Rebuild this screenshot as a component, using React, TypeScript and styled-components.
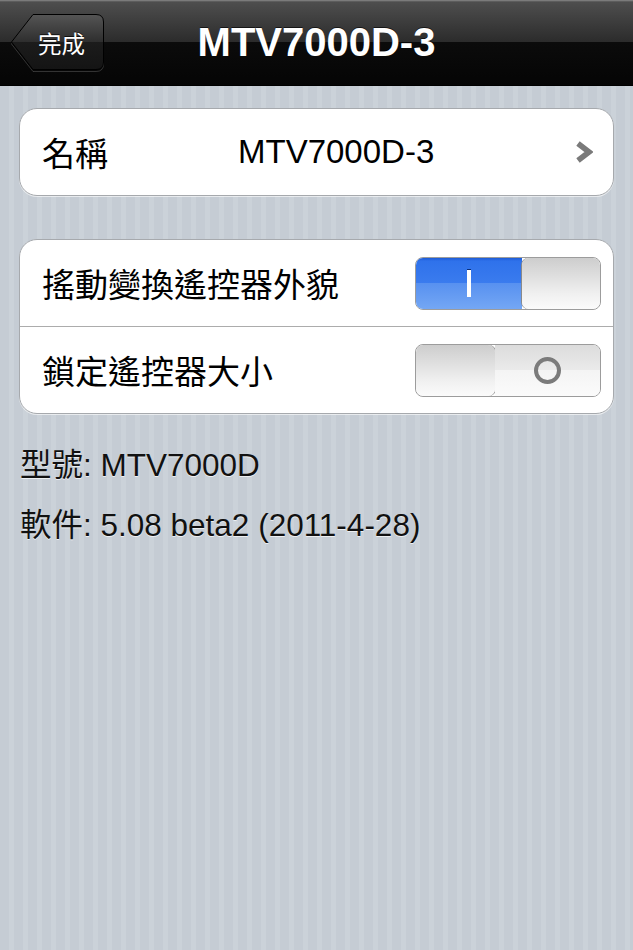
import styled, { createGlobalStyle } from 'styled-components';

const GlobalStyle = createGlobalStyle`
    html, body {
        margin: 0;
        padding: 0;
        min-height: 100%;
    }
    body {
        min-height: 950px;
        background: repeating-linear-gradient(90deg, #c5ccd4 0 9px, #cbd2d9 9px 14px);
        font-family: "Liberation Sans", "Noto Sans CJK TC", sans-serif;
    }
`;

const NavBar = styled.header`
    height: 85px;
    display: grid;
    grid-template-columns: 1fr auto 1fr;
    align-items: center;
    padding: 0 10px;
    background: linear-gradient(
        #8a8a8a 0,
        #4e4e4e 2px,
        #2b2b2b 50%,
        #0b0b0b 50%,
        #050505 100%
    );
    border-bottom: 1px solid #000;
`;

const BackButton = styled.button`
    justify-self: start;
    display: grid;
    width: 95px;
    height: 58px;
    padding: 0;
    border: 0;
    background: none;
    cursor: pointer;

    & > * {
        grid-area: 1 / 1;
    }
`;

const BackLabel = styled.span`
    align-self: center;
    padding-left: 28px;
    text-align: left;
    color: #fff;
    font-size: 23.5px;
    font-family: "Noto Sans CJK TC", sans-serif;
    text-shadow: 0 -1px 0 rgba(0, 0, 0, 0.7);
`;

const Title = styled.h1`
    margin: 0;
    color: #fff;
    font-size: 40px;
    font-weight: bold;
    text-shadow: 0 -1px 0 rgba(0, 0, 0, 0.6);
`;

const Content = styled.main`
    display: flex;
    flex-direction: column;
    padding: 22px 19px 0;
`;

const Group = styled.section<{ $gap?: number }>`
    margin-bottom: ${(p) => p.$gap ?? 0}px;
    background: #fff;
    border: 1px solid #a6a9ad;
    border-radius: 18px;
    box-shadow: 0 1px 0 rgba(255, 255, 255, 0.6);
    overflow: hidden;
`;

const Row = styled.div<{ $columns: string }>`
    height: 86px;
    display: grid;
    grid-template-columns: ${(p) => p.$columns};
    align-items: center;
    padding: 0 12px 0 22px;

    & + & {
        border-top: 1px solid #acacac;
    }
`;

const Label = styled.span`
    font-size: 33px;
    color: #000;
`;

const Value = styled.span`
    font-size: 33px;
    color: #000;
`;

const Chevron = styled.svg`
    margin-right: 8px;
`;

const SwitchTrack = styled.div<{ $on: boolean }>`
    width: 184px;
    height: 51px;
    display: grid;
    grid-template-columns: ${(p) => (p.$on ? '106px 78px' : '79px 105px')};
    border: 1px solid #9c9c9c;
    border-radius: 8px;
    overflow: hidden;
`;

const SwitchOn = styled.div`
    display: flex;
    align-items: center;
    justify-content: center;
    background: linear-gradient(#1d5bd6 0, #2f72eb 6%, #3a7bee 48%, #5891f0 50%, #74a7f4 100%);
`;

const OnMark = styled.span`
    width: 4px;
    height: 27px;
    background: #fff;
    box-shadow: 0 -1px 0 #0c2f78;
`;

const SwitchOff = styled.div`
    display: flex;
    align-items: center;
    justify-content: center;
    background: linear-gradient(#dcdcdc 0, #eaeaea 48%, #f4f4f4 50%, #fbfbfb 100%);
`;

const OffMark = styled.span`
    width: 19px;
    height: 19px;
    border: 4px solid #7b7b7b;
    border-radius: 50%;
`;

const Knob = styled.div<{ $side: 'left' | 'right' }>`
    background: linear-gradient(#cdcdcd, #f0f0f0 70%, #fbfbfb);
    border-radius: 7px;
    box-shadow: ${(p) => (p.$side === 'left' ? '1px 0 0 #8a8a8a' : '-1px 0 0 #8a8a8a')};
`;

const Info = styled.div`
    margin-top: 21px;
    padding-left: 1px;
`;

const InfoLine = styled.p`
    margin: 0;
    height: 60px;
    line-height: 60px;
    font-size: 31.5px;
    color: #111;
    text-shadow: 0 1px 0 rgba(255, 255, 255, 0.7);
`;

function Switch({ on }: { on: boolean }) {
    return (
        <SwitchTrack $on={on}>
            {on ? (
                <>
                    <SwitchOn>
                        <OnMark />
                    </SwitchOn>
                    <Knob $side="right" />
                </>
            ) : (
                <>
                    <Knob $side="left" />
                    <SwitchOff>
                        <OffMark />
                    </SwitchOff>
                </>
            )}
        </SwitchTrack>
    );
}

function BackShape() {
    return (
        <svg width="95" height="58" viewBox="0 0 95 58">
            <defs>
                <linearGradient id="backFill" x1="0" y1="0" x2="0" y2="1">
                    <stop offset="0" stopColor="#555" />
                    <stop offset="0.5" stopColor="#2e2e2e" />
                    <stop offset="0.5" stopColor="#1c1c1c" />
                    <stop offset="1" stopColor="#141414" />
                </linearGradient>
            </defs>
            <path
                d="M23 1.5 H86 Q93.5 1.5 93.5 9 V49 Q93.5 56.5 86 56.5 H23 L1.5 29 Z"
                fill="none"
                stroke="rgba(255,255,255,0.18)"
                transform="translate(0 1)"
            />
            <path
                d="M23 0.5 H86 Q93.5 0.5 93.5 8 V48 Q93.5 55.5 86 55.5 H23 L1.5 28 Z"
                fill="url(#backFill)"
                stroke="#000"
                strokeLinejoin="round"
            />
        </svg>
    );
}

export default function App() {
    return (
        <>
            <GlobalStyle />
            <NavBar>
                <BackButton>
                    <BackShape />
                    <BackLabel>完成</BackLabel>
                </BackButton>
                <Title>MTV7000D-3</Title>
                <span />
            </NavBar>
            <Content>
                <Group $gap={43}>
                    <Row $columns="196px 1fr auto">
                        <Label>名稱</Label>
                        <Value>MTV7000D-3</Value>
                        <Chevron width="18" height="24" viewBox="0 0 18 24">
                            <polyline
                                points="3,3.5 14,12 3,20.5"
                                fill="none"
                                stroke="#7a7a7a"
                                strokeWidth="5.5"
                            />
                        </Chevron>
                    </Row>
                </Group>
                <Group>
                    <Row $columns="1fr auto">
                        <Label>搖動變換遙控器外貌</Label>
                        <Switch on />
                    </Row>
                    <Row $columns="1fr auto">
                        <Label>鎖定遙控器大小</Label>
                        <Switch on={false} />
                    </Row>
                </Group>
                <Info>
                    <InfoLine>型號: MTV7000D</InfoLine>
                    <InfoLine>軟件: 5.08 beta2 (2011-4-28)</InfoLine>
                </Info>
            </Content>
        </>
    );
}
